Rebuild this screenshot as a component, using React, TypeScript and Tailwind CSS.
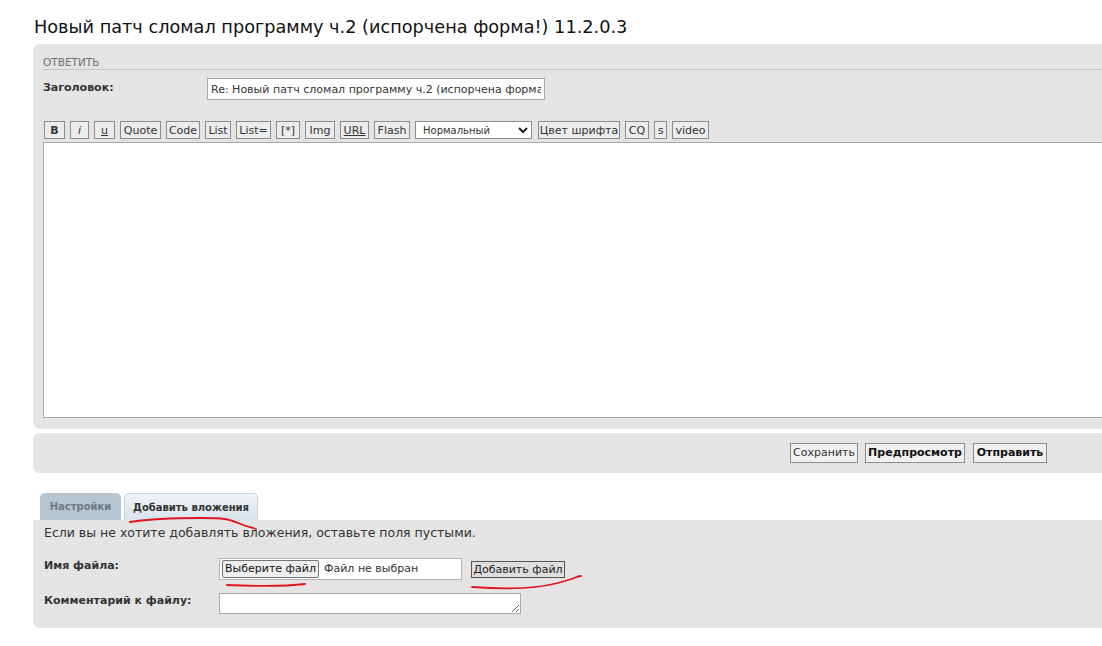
import React from 'react'

const tools = [
  { label: 'B', w: 'w-[21px]', cls: 'font-bold' },
  { label: 'i', w: 'w-[19px]', cls: 'italic' },
  { label: 'u', w: 'w-[21px]', cls: 'underline' },
  { label: 'Quote', w: 'w-[41px]', cls: '' },
  { label: 'Code', w: 'w-[34px]', cls: '' },
  { label: 'List', w: 'w-[26px]', cls: '' },
  { label: 'List=', w: 'w-[35px]', cls: '' },
  { label: '[*]', w: 'w-[24px]', cls: '' },
  { label: 'Img', w: 'w-[30px]', cls: '' },
  { label: 'URL', w: 'w-[29px]', cls: 'underline' },
  { label: 'Flash', w: 'w-[36px]', cls: '' },
]

const tools2 = [
  { label: 'Цвет шрифта', w: 'w-[82px]' },
  { label: 'CQ', w: 'w-[24px]' },
  { label: 's', w: 'w-[13px]' },
  { label: 'video', w: 'w-[37px]' },
]

function ToolButton({ label, w, cls }: { label: string; w: string; cls?: string }) {
  return (
    <button
      type="button"
      className={`${w} ${cls ?? ''} flex h-[18px] shrink-0 items-center justify-center border border-[#8c8c8c] bg-[#ececec] text-[11px] leading-none text-[#333]`}
    >
      {label}
    </button>
  )
}

export default function App() {
  return (
    <div className="relative min-h-screen overflow-hidden bg-white font-['DejaVu_Sans',Verdana,sans-serif] text-[#333]">
      <div className="pl-[33px] pt-[14px]">
        <h1 className="pl-[1px] text-[17.7px] leading-[26px] text-[#111]">
          Новый патч сломал программу ч.2 (испорчена форма!) 11.2.0.3
        </h1>

        {/* reply panel */}
        <div className="mt-[4px] w-[1100px] rounded-[7px] bg-[#e4e4e4] px-[10px] pb-[11px] pt-[10px]">
          <div className="h-[16px] border-b border-[#c6c6c6] text-[10.5px] leading-[16px] text-[#707070]">
            ОТВЕТИТЬ
          </div>
          <div className="mt-[8px] flex">
            <div className="w-[164px] pt-[3px] text-[11px] font-bold leading-[14px] text-[#333]">
              Заголовок:
            </div>
            <input
              readOnly
              value="Re: Новый патч сломал программу ч.2 (испорчена форма!) 11.2.0.3"
              className="h-[22px] w-[338px] border border-[#aaa] bg-white px-[3px] text-[11px] text-[#333] outline-none"
            />
          </div>

          <div className="mt-[21px] flex items-center gap-[5px] pl-[1px]">
            {tools.map((t) => (
              <ToolButton key={t.label} {...t} />
            ))}
            <div className="flex h-[18px] w-[117px] shrink-0 items-center justify-between border border-[#8c8c8c] bg-white pl-[7px] pr-[3px] text-[10px] text-[#333]">
              <span>Нормальный</span>
              <svg width="10" height="7" viewBox="0 0 10 7">
                <path d="M1 1 L5 5 L9 1" fill="none" stroke="#222" strokeWidth="2" />
              </svg>
            </div>
            <div className="-ml-[4px] w-0" />
            {tools2.map((t) => (
              <ToolButton key={t.label} {...t} />
            ))}
          </div>

          <textarea className="mt-[3px] block h-[276px] w-full resize-none border border-[#aaa] bg-white outline-none" />
        </div>

        {/* submit panel */}
        <div className="mt-[4px] flex h-[40px] w-[1100px] items-center justify-end gap-[7px] rounded-[7px] bg-[#e4e4e4] pr-[86px]">
          <button className="h-[20px] w-[68px] border border-[#8c8c8c] bg-[#f0f0f0] text-[11px] text-[#333]">
            Сохранить
          </button>
          <button className="h-[20px] w-[100px] border border-[#8c8c8c] bg-[#f0f0f0] text-[11px] font-bold text-[#111]">
            Предпросмотр
          </button>
          <button className="ml-[1px] h-[20px] w-[74px] border border-[#8c8c8c] bg-[#f0f0f0] text-[11px] font-bold text-[#111]">
            Отправить
          </button>
        </div>

        {/* tabs */}
        <div className="mt-[20px] flex items-end gap-[3px] pl-[7px]">
          <div className="flex h-[27px] w-[81px] items-center justify-center rounded-t-[5px] bg-[#b5c6d2] text-[10px] font-bold text-[#6c7a84]">
            Настройки
          </div>
          <div className="flex h-[27px] w-[134px] items-center justify-center rounded-t-[5px] border border-b-0 border-[#c4d2dc] bg-gradient-to-b from-[#eef3f7] to-[#d8e3eb] text-[10px] font-bold text-[#333]">
            Добавить вложения
          </div>
        </div>

        {/* attachments panel */}
        <div className="w-[1100px] rounded-b-[7px] rounded-tr-[7px] bg-[#e4e4e4] px-[11px] pb-[14px] pt-[5px]">
          <p className="text-[12.5px] leading-[16px] text-[#333]">
            Если вы не хотите добавлять вложения, оставьте поля пустыми.
          </p>
          <div className="mt-[17px] flex items-start">
            <div className="w-[175px] pt-[1px] text-[11px] font-bold leading-[14px] text-[#333]">
              Имя файла:
            </div>
            <div className="flex h-[22px] w-[243px] items-center border border-[#b5b5b5] bg-white pl-[2px]">
              <span className="flex h-[18px] w-[97px] items-center justify-center rounded-[2px] border border-[#767676] bg-[#efefef] text-[11px] text-[#111]">
                Выберите файл
              </span>
              <span className="ml-[5px] text-[11px] text-[#333]">Файл не выбран</span>
            </div>
            <button className="ml-[9px] mt-[3px] h-[17px] w-[94px] border border-[#555] bg-[#dedede] text-[11px] leading-none text-[#222]">
              Добавить файл
            </button>
          </div>
          <div className="mt-[13px] flex items-start">
            <div className="w-[175px] pt-[1px] text-[11px] font-bold leading-[14px] text-[#333]">
              Комментарий к файлу:
            </div>
            <textarea className="block h-[21px] w-[302px] resize border border-[#aaa] bg-white outline-none" />
          </div>
        </div>
      </div>

      {/* hand-drawn red marks */}
      <svg
        className="pointer-events-none absolute left-0 top-0"
        width="1102"
        height="646"
        viewBox="0 0 1102 646"
      >
        <g fill="none" stroke="#e0141e" strokeWidth="1.8" strokeLinecap="round">
          <path d="M130 522 C 150 519, 175 518, 200 518 S 228 519, 238 523 S 250 527, 256 529" />
          <path d="M227 585 C 250 586, 280 587, 305 584" />
          <path d="M472 587 C 500 589, 535 589, 558 583 S 573 577, 581 576" />
        </g>
      </svg>
    </div>
  )
}
